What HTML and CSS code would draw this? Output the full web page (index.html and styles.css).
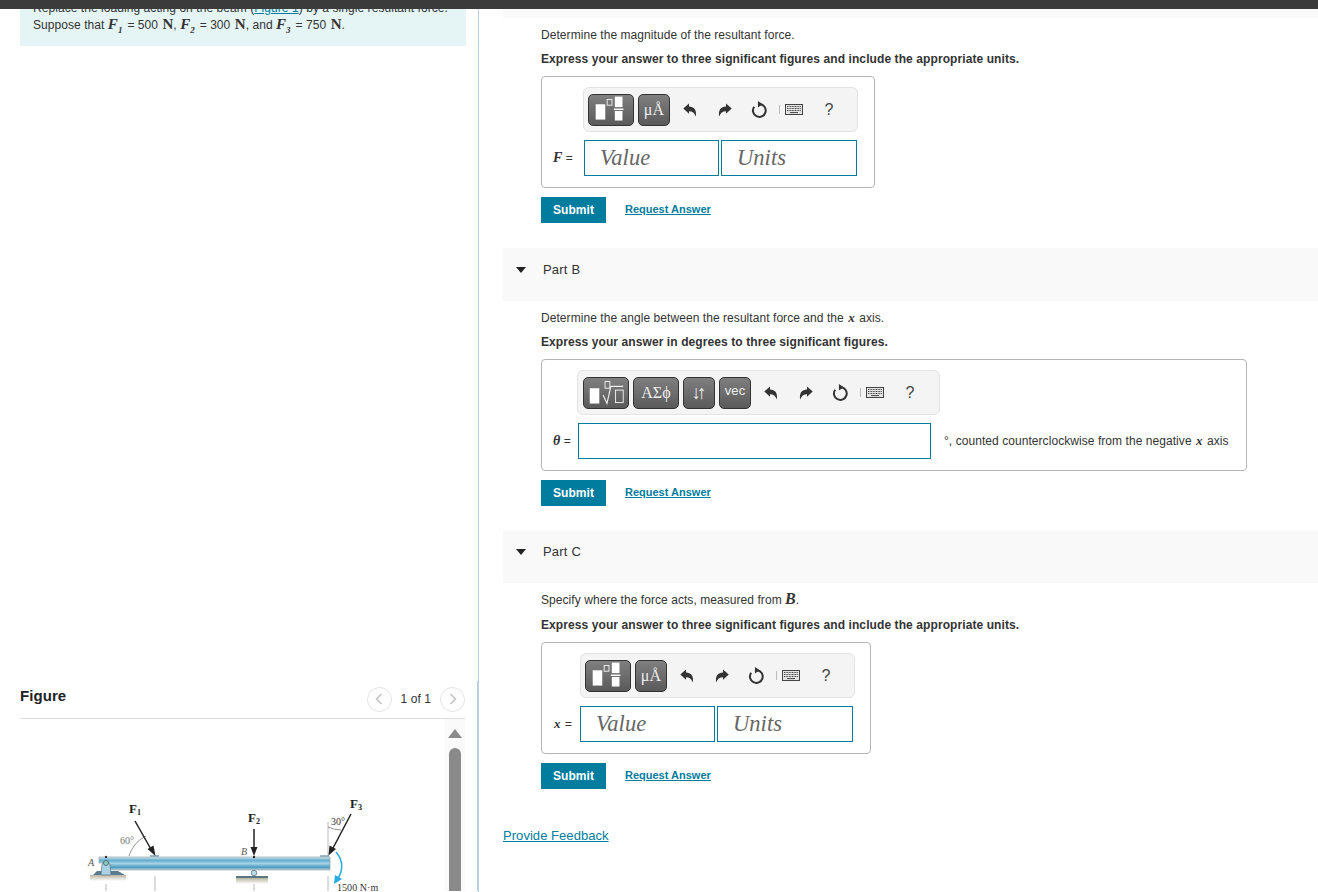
FILE: index.html
```html
<!DOCTYPE html>
<html lang="en">
<head>
<meta charset="utf-8">
<title>Part B</title>
<link rel="stylesheet" href="styles.css">
</head>
<body>
<svg class="defs" width="0" height="0" aria-hidden="true">
  <symbol id="undo" viewBox="0 0 14 14"><path d="M0.3 5.5 L6 0.5 V3.4 C11 3.4 14 7 12.8 13.5 C11.6 9.8 9.4 8.2 6 8.2 V10.8 Z"/></symbol>
  <symbol id="redo" viewBox="0 0 14 14"><path d="M13.7 5.5 L8 0.5 V3.4 C3 3.4 0 7 1.2 13.5 C2.4 9.8 4.6 8.2 8 8.2 V10.8 Z"/></symbol>
  <symbol id="reset" viewBox="0 0 16 16"><path d="M8.6 3 A6 6 0 1 1 3 5.4" fill="none" stroke="#333" stroke-width="1.9"/><path d="M6.5 0 L11 3 L6.5 6 Z"/></symbol>
  <symbol id="keys" viewBox="0 0 18 11"><rect x=".5" y=".5" width="17" height="10" fill="#e4e4e4" stroke="#444"/><path d="M2 2.5h14M2 4.5h14M2 6.5h14" stroke="#444" stroke-dasharray="1 .6" fill="none"/><path d="M5 8.6h8" stroke="#444" fill="none"/></symbol>
  <symbol id="frac" viewBox="0 0 46 32"><rect x="7" y="10" width="10" height="16" fill="#fff"/><rect x="19" y="5" width="5" height="6" fill="none" stroke="#eee"/><rect x="27" y="2" width="8" height="11" fill="#fff"/><rect x="26" y="14.500" width="10" height="1.500" fill="#fff"/><rect x="27" y="17" width="8" height="10" fill="#fff"/></symbol>
  <symbol id="root" viewBox="0 0 46 32"><rect x="6" y="11" width="10" height="16" fill="#fff"/><rect x="22" y="4" width="5" height="7" fill="none" stroke="#eee"/><path d="M20 18 L24 27 L28 9 H41" fill="none" stroke="#eee" stroke-width="1.200"/><rect x="33" y="13" width="8" height="13" fill="none" stroke="#eee"/></symbol>
</svg>

<div class="topbar"></div>
<div class="page">
  <aside class="left">
    <div class="problem">
      <p>Replace the loading acting on the beam (<a href="#">Figure 1</a>) by a single resultant force.<br>
      Suppose that <i class="m f">F<sub>1</sub></i> = 500 <b class="m n">N</b>, <i class="m f">F<sub>2</sub></i> = 300 <b class="m n">N</b>, and <i class="m f">F<sub>3</sub></i> = 750 <b class="m n">N</b>.</p>
    </div>
    <section class="figure">
      <div class="figure-head">
        <h2>Figure</h2>
        <div class="pager">
          <span class="circle"><svg width="8" height="12" viewBox="0 0 8 12"><path d="M6.500 1 L1.500 6 L6.500 11" fill="none" stroke="#c4c4c4" stroke-width="1.600"/></svg></span>
          <span class="count">1 of 1</span>
          <span class="circle"><svg width="8" height="12" viewBox="0 0 8 12"><path d="M1.500 1 L6.500 6 L1.500 11" fill="none" stroke="#c4c4c4" stroke-width="1.600"/></svg></span>
        </div>
      </div>
      <div class="figure-body">
        <svg class="beam" width="425" height="172" viewBox="20 720 425 172">
          <defs>
            <linearGradient id="steel" x1="0" y1="0" x2="0" y2="1">
              <stop offset="0" stop-color="#dbe9ef"/><stop offset=".25" stop-color="#62accf"/><stop offset=".5" stop-color="#a5d2e4"/><stop offset=".8" stop-color="#4b9bc2"/><stop offset="1" stop-color="#c2d8e2"/>
            </linearGradient>
            <linearGradient id="ground" x1="0" y1="0" x2="0" y2="1"><stop offset="0" stop-color="#b7b49f"/><stop offset="1" stop-color="#fff"/></linearGradient>
          </defs>
          <g stroke="#bbb" stroke-width="1" fill="none">
            <path d="M106 885V892M155 877V892M254 885V892M328 877V892M328 823V856"/>
          </g>
          <path d="M129 857 A33 33 0 0 1 146 837" fill="none" stroke="#666" stroke-width=".7"/>
          <path d="M328 828 Q334 831 341 831" fill="none" stroke="#666" stroke-width=".7"/>
          <rect x="90" y="876" width="36" height="6" fill="url(#ground)"/>
          <rect x="236" y="879" width="32" height="6" fill="url(#ground)"/>
          <rect x="150" y="856" width="9" height="2" fill="#9db8c4"/>
          <rect x="320" y="856" width="9" height="2" fill="#9db8c4"/>
          <path d="M99 858 H330 V871 H106 V864 H99 Z" fill="url(#steel)" stroke="#8a9aa3" stroke-width=".6"/>
          <path d="M93 876 L97 872 H118 L125 876 Z" fill="#5a7d90"/>
          <path d="M101 876 L102 865 Q106 860 110 865 L111 876 Z" fill="#a9d2e2" stroke="#567" stroke-width=".6"/>
          <circle cx="106" cy="864" r="2.500" fill="#8cb" stroke="#456" stroke-width=".7"/>
          <circle cx="106" cy="858" r="1.200" fill="#333"/>
          <circle cx="254" cy="874" r="2.800" fill="#b8dbe8" stroke="#567" stroke-width=".7"/>
          <rect x="236" y="877" width="32" height="2" fill="#5a7482"/>
          <g fill="#222" stroke="#222">
            <path d="M135 822 L152 852" stroke-width="1.500" fill="none"/>
            <path d="M155.500 857 L147.500 850 L153.500 846.500 Z" stroke="none"/>
            <path d="M254 830 V851" stroke-width="1.500" fill="none"/>
            <path d="M254 857 L250.500 848 H257.500 Z" stroke="none"/>
            <path d="M351 815 L332 851" stroke-width="1.500" fill="none"/>
            <path d="M328.500 856.500 L329.500 846.500 L336 850 Z" stroke="none"/>
            <circle cx="254" cy="858" r="1.200" stroke="none"/>
          </g>
          <path d="M336 853 Q347 866 337 881" fill="none" stroke="#27a9e1" stroke-width="1.500"/>
          <path d="M334 885 L335 876 L342 880 Z" fill="#27a9e1"/>
          <g class="fig-bold">
            <text x="129" y="814">F<tspan class="fig-sub" dy="2">1</tspan></text>
            <text x="248" y="823">F<tspan class="fig-sub" dy="2">2</tspan></text>
            <text x="350" y="809">F<tspan class="fig-sub" dy="2">3</tspan></text>
          </g>
          <g class="fig-text">
            <text x="120" y="845" class="fig-grey">60°</text>
            <text x="331" y="826">30°</text>
            <text x="88" y="867" class="fig-it">A</text>
            <text x="241" y="856" class="fig-it">B</text>
            <text x="337" y="892">1500 N·m</text>
          </g>
        </svg>
        <div class="scrollbar"><span class="arrow"></span><span class="thumb"></span></div>
      </div>
    </section>
  </aside>

  <main class="right">
    <div class="strip"></div>
    <div class="part-body first">
      <p>Determine the magnitude of the resultant force.</p>
      <p class="bold">Express your answer to three significant figures and include the appropriate units.</p>
      <div class="answer">
        <div class="toolbar tb-a">
          <span class="btn w46"><svg width="46" height="32"><use href="#frac"/></svg></span>
          <span class="btn w32 sym">μÅ</span>
          <span class="tools">
            <span class="tool"><svg width="14" height="14"><use href="#undo"/></svg></span>
            <span class="tool"><svg width="14" height="14"><use href="#redo"/></svg></span>
            <span class="tool"><svg width="17" height="17"><use href="#reset"/></svg></span>
            <span class="pipe"></span>
            <svg class="kbd" width="18" height="11"><use href="#keys"/></svg>
            <span class="help">?</span>
          </span>
        </div>
        <label class="lab lab-a"><i class="m">F</i> =</label>
        <div class="fields"><span class="field ph">Value</span><span class="field ph">Units</span></div>
      </div>
      <div class="actions"><a class="submit" href="#">Submit</a><a class="request" href="#">Request Answer</a></div>
    </div>

    <h3 class="part"><span class="caret"></span>Part B</h3>
    <div class="part-body">
      <p>Determine the angle between the resultant force and the <i class="m x">x</i> axis.</p>
      <p class="bold">Express your answer in degrees to three significant figures.</p>
      <div class="answer">
        <div class="toolbar tb-b">
          <span class="btn w46"><svg width="46" height="32"><use href="#root"/></svg></span>
          <span class="btn w46 sym">ΑΣϕ</span>
          <span class="btn w32 sym arrows">↓↑</span>
          <span class="btn w32 vec">vec</span>
          <span class="tools">
            <span class="tool"><svg width="14" height="14"><use href="#undo"/></svg></span>
            <span class="tool"><svg width="14" height="14"><use href="#redo"/></svg></span>
            <span class="tool"><svg width="17" height="17"><use href="#reset"/></svg></span>
            <span class="pipe"></span>
            <svg class="kbd" width="18" height="11"><use href="#keys"/></svg>
            <span class="help">?</span>
          </span>
        </div>
        <label class="lab lab-b"><i class="m">θ</i> =</label>
        <div class="fields"><span class="field wide"></span><span class="after">°, counted counterclockwise from the negative <i class="m x">x</i> axis</span></div>
      </div>
      <div class="actions"><a class="submit" href="#">Submit</a><a class="request" href="#">Request Answer</a></div>
    </div>

    <h3 class="part"><span class="caret"></span>Part C</h3>
    <div class="part-body spaced">
      <p>Specify where the force acts, measured from <i class="m big">B</i>.</p>
      <p class="bold">Express your answer to three significant figures and include the appropriate units.</p>
      <div class="answer">
        <div class="toolbar tb-c">
          <span class="btn w46"><svg width="46" height="32"><use href="#frac"/></svg></span>
          <span class="btn w32 sym">μÅ</span>
          <span class="tools">
            <span class="tool"><svg width="14" height="14"><use href="#undo"/></svg></span>
            <span class="tool"><svg width="14" height="14"><use href="#redo"/></svg></span>
            <span class="tool"><svg width="17" height="17"><use href="#reset"/></svg></span>
            <span class="pipe"></span>
            <svg class="kbd" width="18" height="11"><use href="#keys"/></svg>
            <span class="help">?</span>
          </span>
        </div>
        <label class="lab lab-c"><i class="m x">x</i> =</label>
        <div class="fields"><span class="field ph">Value</span><span class="field ph">Units</span></div>
      </div>
      <div class="actions"><a class="submit" href="#">Submit</a><a class="request" href="#">Request Answer</a></div>
    </div>
    <a class="feedback" href="#">Provide Feedback</a>
  </main>
</div>
</body>
</html>
```

FILE: styles.css
```css
* { box-sizing: border-box; }
html, body { margin: 0; height: 892px; overflow: hidden; background: #fff; }
body { font: 12px/16px "Liberation Sans", Arial, sans-serif; letter-spacing: .06px; color: #333; }
a { color: #007c9e; }
p { margin: 0; }
.defs { position: absolute; }
.topbar { height: 9px; background: #3b3b3b; }
.page { display: flex; height: 883px; overflow: hidden; }

/* left column */
.left { width: 479px; flex: none; border-right: 1px solid #b9d0e2; padding-left: 20px; overflow: hidden; }
.problem { width: 446px; height: 37px; background: #e5f5f6; padding: 0 13px; overflow: hidden; }
.problem p { margin-top: -9px; line-height: 16px; }
.m { font-family: "Liberation Serif", serif; font-size: 14px; }
i.m { font-weight: 700; }
.f { font-size: 15px; margin-right: 1.500px; }
.n { font-size: 15px; margin-left: 1px; }
.x { font-size: 13px; margin: 0 1px; }
sub { font-size: 9px; line-height: 0; }
.figure { margin-top: 635px; width: 458px; border-right: 1px solid #b9d0e2; }
.figure-head { width: 445px; height: 38px; display: flex; align-items: center; justify-content: space-between; border-bottom: 1px solid #ddd; }
.figure-head h2 { margin: -7px 0 0; font-size: 15px; font-weight: 700; color: #222; }
.pager { display: flex; align-items: center; gap: 9px; margin-top: -1px; }
.circle { width: 25px; height: 25px; border: 1px solid #e4e4e4; border-radius: 50%; display: flex; align-items: center; justify-content: center; }
.count { font-size: 12px; }
.figure-body { display: flex; height: 172px; overflow: hidden; }
.beam { flex: none; display: block; }
.fig-bold text { font: 700 13px "Liberation Serif", serif; fill: #222; }
.fig-bold .fig-sub { font-size: 8px; }
.fig-text text { font: 10px "Liberation Serif", serif; fill: #333; }
.fig-text .fig-grey { fill: #777; }
.fig-text .fig-it { font-style: italic; fill: #555; }
.scrollbar { width: 20px; background: #fafafa; display: flex; flex-direction: column; align-items: center; padding-top: 10px; }
.arrow { width: 0; height: 0; border: solid transparent; border-width: 0 7px 9px; border-bottom-color: #8a8a8a; }
.thumb { width: 12px; height: 200px; margin-top: 10px; background: #8a8a8a; border-radius: 6px 6px 0 0; }

/* right column */
.right { flex: 1; padding-left: 24px; min-width: 0; }
.strip { height: 9px; background: #f9f9f9; }
.part { display: flex; align-items: center; height: 53px; margin: 0; padding: 0 0 9px 13px; background: #f9f9f9; font-size: 13px; font-weight: 400; letter-spacing: .2px; color: #333; }
.caret { width: 0; height: 0; margin-right: 17px; border: solid transparent; border-width: 6px 5px 0; border-top-color: #222; }
.part-body { padding: 9px 0 24px 38px; }
.part-body.first { padding-bottom: 25px; }
.part-body.spaced { padding-top: 8px; }
.part-body p + p { margin-top: 8px; }
.part-body.spaced p + p { margin-top: 9px; }
.bold { font-weight: 700; letter-spacing: .09px; }
.big { font-size: 16px; line-height: 15px; font-weight: 400; }

.answer { display: grid; grid-template-columns: auto auto; column-gap: 9px; row-gap: 8px; width: fit-content; margin-top: 9px; padding: 10px 15px 11px 11px; border: 1px solid #b5b5b5; border-radius: 4px; }
.toolbar { grid-column: 2; display: flex; align-items: center; gap: 4px; height: 45px; padding-left: 4px; background: #f4f4f4; border: 1px solid #e3e3e3; border-radius: 6px; }
.tb-a { width: 275px; margin-left: -1px; margin-right: 1px; }
.tb-b { width: 363px; margin-left: -1px; padding-left: 5px; }
.tb-c { width: 275px; }
.btn { height: 32px; display: flex; align-items: center; justify-content: center; color: #eee; background: linear-gradient(#7f7f7f, #5a5a5a); border: 1px solid #333; border-radius: 5px; overflow: hidden; flex: none; }
.w46 { width: 46px; }
.w32 { width: 32px; }
.sym { font: 16px "Liberation Serif", serif; }
.arrows { font-size: 19px; letter-spacing: -4px; padding-right: 4px; }
.vec { font: 13px "Liberation Sans", sans-serif; padding-bottom: 4px; }
.tools { display: flex; align-items: center; margin-left: -2px; }
.tool { width: 35px; display: flex; justify-content: center; fill: #333; }
.pipe { width: 1px; height: 9px; margin: 0 5px 0 2px; background: #bbb; }
.kbd { display: block; }
.help { width: 52px; text-align: center; font-size: 16px; color: #444; }
.lab { grid-column: 1; display: flex; align-items: center; white-space: pre; }
.lab-a { width: 22px; }
.lab-b { width: 16px; }
.lab-c { width: 18px; }
.fields { grid-column: 2; display: flex; align-items: center; gap: 2px; }
.field { height: 36px; border: 1px solid #007c9e; background: #fff; display: flex; align-items: center; }
.ph { width: 135px; padding-left: 15px; font: italic 22.500px "Liberation Serif", serif; color: #666; }
.ph + .ph { width: 136px; }
.wide { width: 353px; }
.after { width: 287px; margin-left: 11px; white-space: nowrap; }
.actions { display: flex; align-items: center; gap: 19px; margin-top: 9px; }
.submit { width: 65px; height: 26px; padding-bottom: 1px; display: flex; align-items: center; justify-content: center; background: #007c9e; color: #fff; font-weight: 700; text-decoration: none; }
.request { font-size: 11px; font-weight: 700; letter-spacing: 0; margin-bottom: 2px; }
.feedback { display: block; width: fit-content; margin-top: 15px; font-size: 13px; letter-spacing: .05px; }
```
